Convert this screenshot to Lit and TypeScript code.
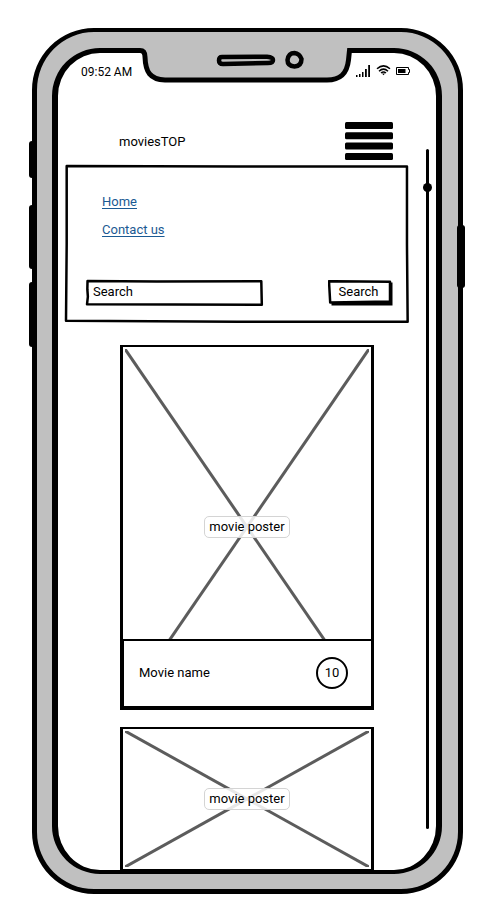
import { LitElement, html, svg, css } from "lit";
import { customElement, property } from "lit/decorators.js";

/** Hand-drawn outline that stretches with the box it surrounds. */
@customElement("sketch-outline")
class SketchOutline extends LitElement {
  @property() d = "M0 0 L100 0 L100 100 L0 100 Z";
  static styles = css`
    :host { position: absolute; inset: 1px; pointer-events: none; }
    svg { display: block; width: 100%; height: 100%; overflow: visible; }
    path { fill: none; stroke: #000; stroke-width: 2.5; stroke-linejoin: round; vector-effect: non-scaling-stroke; }
  `;
  render() {
    return html`<svg viewBox="0 0 100 100" preserveAspectRatio="none" aria-hidden="true"><path d=${this.d}></path></svg>`;
  }
}

@customElement("movie-card")
class MovieCard extends LitElement {
  @property() name = "";
  @property() rating = "";
  static styles = css`
    :host { display: block; }
    .card { display: grid; border: 3px solid #000; border-top-width: 2px; }
    .poster { grid-area: 1 / 1; display: grid; place-items: center; }
    .tall { height: 360px; }
    .short { height: 140px; }
    .cross { grid-area: 1 / 1; width: 100%; height: 100%; padding: 2px; box-sizing: border-box; }
    .cross line { stroke: #5c5c5c; stroke-width: 3px; vector-effect: non-scaling-stroke; }
    .label {
      grid-area: 1 / 1; z-index: 1; padding: 0 4px; line-height: 20px;
      border: 1px solid #d4d4d4; border-radius: 5px; background: rgba(255, 255, 255, 0.85);
    }
    .caption {
      grid-area: 1 / 1; align-self: end; z-index: 1; display: flex; align-items: center;
      justify-content: space-between; height: 63px; padding: 0 23px 2px 15px; background: #fff;
      border: solid #000; border-width: 2px 0 1px 1px;
    }
    .rating {
      display: grid; place-items: center; width: 28px; height: 28px;
      border: 2px solid #000; border-radius: 50%;
    }
  `;
  render() {
    return html`
      <article class="card">
        <div class="poster ${this.name ? "tall" : "short"}">
          <svg class="cross" viewBox="0 0 100 100" preserveAspectRatio="none" aria-hidden="true">
            <line x1="0" y1="0" x2="100" y2="100"></line>
            <line x1="100" y1="0" x2="0" y2="100"></line>
          </svg>
          <span class="label">movie poster</span>
        </div>
        ${this.name
          ? html`<div class="caption"><span>${this.name}</span><span class="rating">${this.rating}</span></div>`
          : ""}
      </article>
    `;
  }
}

@customElement("app-root")
class AppRoot extends LitElement {
  static styles = css`
    :host {
      display: block; padding: 28px 37px 26px 32px; background: #fff; color: #000;
      font: 13px/16px Roboto, "Liberation Sans", sans-serif;
    }
    * { box-sizing: border-box; }
    .phone {
      position: relative; padding: 16px 16px 15px 15px; background: #c0c0c0;
      border: solid #000; border-width: 4px 5px 5px 5px; border-radius: 62px;
    }
    .key { position: absolute; width: 6px; background: #000; border-radius: 3px; }
    .mute { left: -8px; top: 109px; height: 37px; }
    .up { left: -8px; top: 173px; height: 64px; }
    .down { left: -8px; top: 250px; height: 65px; }
    .power { right: -7px; top: 193px; width: 8px; height: 63px; }
    .notch { position: absolute; top: 14px; left: 50%; width: 220px; height: 40px; margin-left: -111px; }
    .screen {
      display: flex; flex-direction: column; background: #fff;
      border: solid #000; border-width: 5px 6px 4px 6px; border-radius: 48px;
    }
    .status { display: flex; justify-content: space-between; padding: 11px 25px 0 23px; font-size: 12px; }
    .body { display: grid; grid-template-columns: minmax(0, 1fr) 9px; column-gap: 14px; padding: 42px 4px 0 7px; }
    header { display: flex; align-items: center; justify-content: space-between; padding: 0 16px 0 54px; height: 38px; }
    .title { margin: 0; padding-top: 2px; font-size: 13px; font-weight: 400; }
    .menu { display: block; padding: 0; border: 0; background: none; }
    .menu svg { display: block; }
    .panel {
      position: relative; display: flex; flex-direction: column; justify-content: space-between;
      margin-top: 5px; height: 158px; padding: 29px 16px 17px 21px;
    }
    nav { display: flex; flex-direction: column; align-items: flex-start; gap: 12px; padding-left: 16px; }
    a { color: #1b5a93; text-underline-offset: 2px; }
    form { display: flex; justify-content: space-between; }
    .field, .submit { position: relative; height: 26px; }
    .field { width: 177px; }
    input {
      width: 100%; height: 100%; padding: 0 7px 3px; border: 0; background: none;
      font: inherit; color: #000; outline: none;
    }
    input::placeholder { color: #000; opacity: 1; }
    button { font: inherit; color: #000; }
    .submit { width: 65px; padding: 0 4px 2px 0; border: 0; background: none; }
    .submit svg { position: absolute; inset: 0; }
    .submit span { position: relative; }
    .movies { display: grid; gap: 17px; margin-bottom: -2px; padding: 22px 35px 0 55px; }
    .track { position: relative; margin: 27px 3px 41px; background: #000; border-radius: 2px; }
    .thumb { position: absolute; left: -3px; top: 34px; width: 9px; height: 9px; border-radius: 50%; background: #000; }
  `;

  private statusIcons() {
    return svg`
      <svg width="55" height="14" viewBox="0 0 55 14" aria-hidden="true">
        <path d="M0 11h1.500v2h-1.500zM3 10h1.500v3h-1.500zM6 8h1.500v5h-1.500zM9 5h1.800v8h-1.800zM12.200 1h1.800v12h-1.800z"></path>
        <g fill="none" stroke="#000" stroke-width="1.500">
          <path d="M21 4.800Q27.500 -1 34 4.800"></path>
          <path d="M23 7.200Q27.500 3 32 7.200"></path>
          <path d="M25 9Q27.500 7 30 9"></path>
        </g>
        <path d="M26 9.500h3l-1.500 1.800z"></path>
        <path d="M40.500 3.500h12v2h1v3h-1v2h-12z" fill="none" stroke="#000"></path>
        <path d="M42 5h7.500v4h-7.500z"></path>
      </svg>`;
  }

  render() {
    return html`
      <div class="phone">
        <i class="key mute"></i><i class="key up"></i><i class="key down"></i><i class="key power"></i>
        <main class="screen">
          <div class="status"><time>09:52 AM</time>${this.statusIcons()}</div>
          <div class="body">
            <div>
              <header>
                <h1 class="title">moviesTOP</h1>
                <button class="menu" aria-label="Menu">
                  <svg width="48" height="38" viewBox="0 0 48 38">
                    <rect width="48" height="7" rx="1.500"></rect>
                    <rect y="10.300" width="48" height="7" rx="1.500"></rect>
                    <rect y="20.600" width="48" height="7" rx="1.500"></rect>
                    <rect y="31" width="48" height="7" rx="1.500"></rect>
                  </svg>
                </button>
              </header>
              <section class="panel">
                <sketch-outline d="M0.200 0 L50 0.300 L99.700 0.300 L99.700 50 L99.900 99.800 L50 99.900 L0 99.200 L0.200 50 Z"></sketch-outline>
                <nav><a href="#home">Home</a><a href="#contact">Contact us</a></nav>
                <form @submit=${(e: Event) => e.preventDefault()}>
                  <div class="field">
                    <sketch-outline d="M0.300 0 L40 2 L99.600 1 L99.900 99 L50 98 L0 97 L0.500 65 L0.200 35 Z"></sketch-outline>
                    <input type="text" placeholder="Search" aria-label="Search" />
                  </div>
                  <button class="submit">
                    <svg width="65" height="26" viewBox="0 0 65 26" aria-hidden="true">
                      <path d="M3.500 3L64.500 2.500V25.500H3.500z"></path>
                      <path d="M1 1.200L62 1.800V21.500L2.200 22.500z" fill="#fff" stroke="#000" stroke-width="2.500" stroke-linejoin="round"></path>
                    </svg>
                    <span>Search</span>
                  </button>
                </form>
              </section>
              <div class="movies">
                <movie-card name="Movie name" rating="10"></movie-card>
                <movie-card></movie-card>
              </div>
            </div>
            <div class="track"><i class="thumb"></i></div>
          </div>
        </main>
        <svg class="notch" viewBox="0 0 220 40" aria-hidden="true">
          <path d="M0 0H213V5L211.500 12C211 28 202 34 190 34H28C13 34 9 24 8 12Q8 4 0 4z" fill="#c0c0c0"></path>
          <path d="M0 4.500H3Q8 4.500 8 11C8.500 26 13 33.500 28 34H190C203 34 210 28 211.500 14L212.500 4.500H220" fill="none" stroke="#000" stroke-width="5"></path>
          <path d="M85 11L130 10.800Q136 11.200 136 14Q136 17 131 17L86 18Q82 18 82 14.500Q82 11 85 11z" fill="none" stroke="#000" stroke-width="4.500"></path>
          <path d="M157.500 7Q162.500 7.500 164.500 13Q164.500 20 157.500 20.500Q150.500 20 150.500 14Q151.500 7 157.500 7z" fill="none" stroke="#000" stroke-width="4.500"></path>
        </svg>
      </div>
    `;
  }
}
